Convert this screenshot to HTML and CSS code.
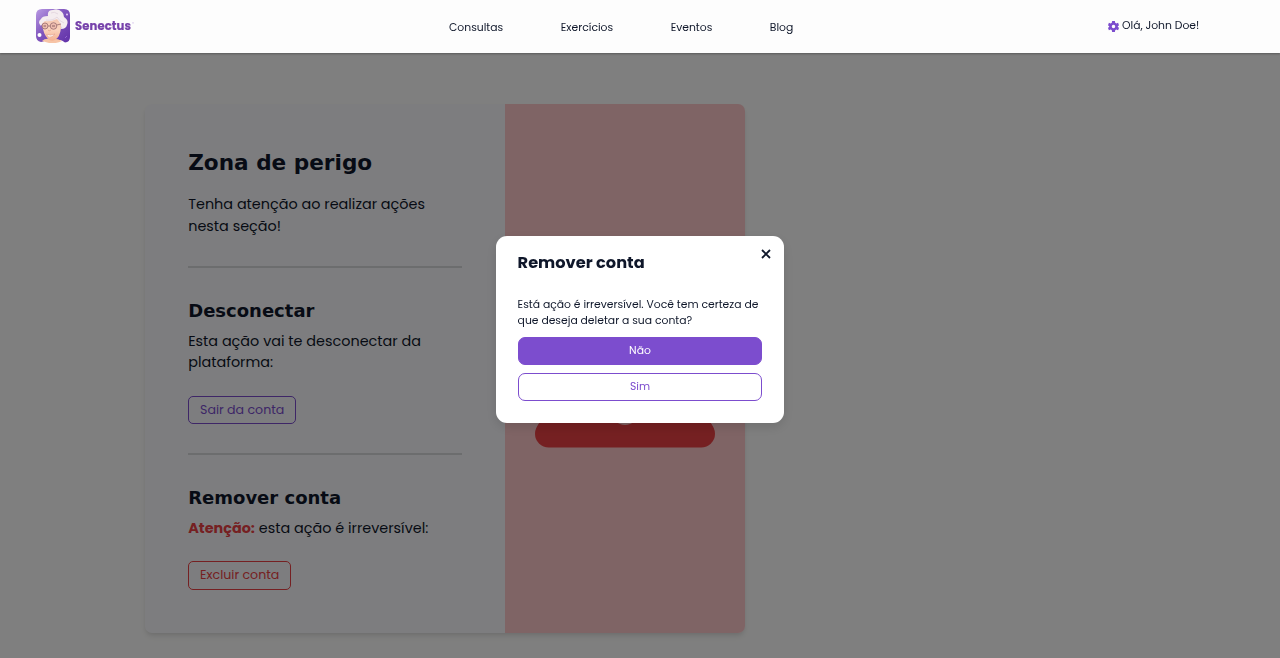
FILE: index.html
```html
<!DOCTYPE html>
<html lang="pt-BR">
<head>
<meta charset="utf-8">
<title>Senectus</title>
<link rel="stylesheet" href="styles.css">
</head>
<body>
<header class="header">
  <a class="logo">
    <svg class="avatar" viewBox="0 0 34 34">
      <defs>
        <linearGradient id="bg" x1="0" y1="0" x2="1" y2="1"><stop stop-color="#b99ae4"/><stop offset=".45" stop-color="#8055bd"/><stop offset="1" stop-color="#6030a8"/></linearGradient>
        <linearGradient id="skin" x1="0" y1="0" x2="0" y2="1"><stop stop-color="#f3c4ae"/><stop offset=".55" stop-color="#fbd3bd"/><stop offset="1" stop-color="#f3b090"/></linearGradient>
      </defs>
      <path d="M6 0H28Q34 0 34 6V28Q34 33 29 33.500Q26 31 24 31L9 31Q8 33 5 33Q0 32 0 27V6Q0 0 6 0Z" fill="url(#bg)"/>
      <path d="M6 32Q9 29 14 30Q21 29 26 32Q20 35 13 34Z" fill="#f7c4a6"/>
      <path d="M6 14Q9 6 17 7Q26 8 25 19Q24 28 19 31Q15 33 12 30Q7 25 6 14Z" fill="url(#skin)"/>
      <path d="M5 17Q1 13 5 10Q6 7 12 7Q11 1 17 1Q22-1 26 3Q28 5 28 8Q33 11 31 16Q30 20 25 20Q26 15 21 10Q14 13 9 12Q6 14 5 17Z" fill="#f4ecef"/>
      <path d="M10 11Q17 12 21 8Q23 12 28 14M15 4Q18 2 22 5" fill="none" stroke="#decfda" stroke-width=".7"/>
      <g fill="#edbcae" stroke="#986c70" stroke-width=".8"><circle cx="9" cy="17" r="3"/><circle cx="17.500" cy="17" r="3.300"/><path d="M12 17H14.200M20.800 16L25 15"/></g>
      <path d="M7.500 17H10M16 17H19" stroke="#80555b" stroke-width=".9"/>
      <path d="M12 21Q13 22.500 15 21" fill="none" stroke="#e6a38c" stroke-width=".8"/>
      <path d="M10.500 25.500Q15 27 19 25Q16 29 12.500 28Z" fill="#fff" stroke="#e4a08d" stroke-width=".6"/>
      <circle cx="3.500" cy="26" r="2" fill="#fff"/><circle cx="31" cy="5.500" r="1" fill="#e2c8f5"/><path d="M29 29L31 27" stroke="#9265cf"/>
    </svg>
    <span class="brand">Senectus</span><span class="mark">®</span>
  </a>
  <nav class="nav"><a>Consultas</a><a>Exercícios</a><a>Eventos</a><a>Blog</a></nav>
  <div class="user">
    <svg class="gear" viewBox="0 0 24 24"><path fill="#7c4dce" fill-rule="evenodd" d="M9 0H15L15.700 4L18 5.200L22 4L24 9L21 12L24 15L22 20L18 18.800L15.700 20L15 24H9L8.300 20L6 18.800L2 20L0 15L3 12L0 9L2 4L6 5.200L8.300 4ZM12 8.200A3.800 3.800 0 1 0 12 15.800A3.800 3.800 0 1 0 12 8.200Z"/></svg>
    <span>Olá, John Doe!</span>
  </div>
</header>
<main class="page">
  <section class="card">
    <div class="content">
      <h1 class="title">Zona de perigo</h1>
      <p class="text intro">Tenha atenção ao realizar ações<br>nesta seção!</p>
      <hr class="rule">
      <h2 class="subtitle">Desconectar</h2>
      <p class="text leave">Esta ação vai te desconectar da<br>plataforma:</p>
      <button class="btn exit">Sair da conta</button>
      <hr class="rule">
      <h2 class="subtitle">Remover conta</h2>
      <p class="text warn"><strong class="danger">Atenção:</strong> esta ação é irreversível:</p>
      <button class="btn delete">Excluir conta</button>
    </div>
    <div class="side">
      <svg class="alert" viewBox="0 0 180 160"><path d="M78 8Q90-8 102 8L177 137Q184 153 166 159H14Q-4 153 3 137Z" fill="#eb4144"/><rect x="0" y="132" width="180" height="27.600" rx="13.800" fill="#eb4144"/><rect x="82" y="45" width="16" height="55" rx="8" fill="#ffc9cb"/><circle cx="90" cy="124" r="13" fill="#ffc9cb"/></svg>
    </div>
  </section>
</main>
<div class="overlay">
  <div class="modal" role="dialog">
    <div class="modal-head">
      <h3 class="modal-title">Remover conta</h3>
      <svg class="close" viewBox="0 0 10 10"><path d="M1 1L9 9M9 1L1 9" stroke="#0f172a" stroke-width="1.800"/></svg>
    </div>
    <p class="question">Está ação é irreversível. Você tem certeza de<br>que deseja deletar a sua conta?</p>
    <button class="choice primary">Não</button>
    <button class="choice">Sim</button>
  </div>
</div>
</body>
</html>
```
FILE: styles.css
```css
* { box-sizing: border-box; }
html { overflow: hidden; }
body { margin: 0; height: 658px; overflow: hidden; background: #fffffe; color: #0f172a; font-family: Poppins, Inter, sans-serif; }
h1, h2, h3, p, hr { margin: 0; }
button { font-family: inherit; }
.header { position: relative; z-index: 3; height: 53px; background: #fdfdfd; box-shadow: 0 1px 2px rgba(0,0,0,.3); display: grid; grid-template-columns: 449px 1fr 172px; font-size: 10.8px; }
.logo { display: flex; padding: 9px 0 0 36px; align-items: flex-start; }
.avatar { width: 34px; height: 34px; }
.brand { width: 57px; margin: 9px 0 0 5px; font-size: 11.6px; line-height: 17px; font-weight: 700; color: #7742ab; -webkit-text-stroke: .2px #7742ab; letter-spacing: .1px; }
.mark { margin-top: 12px; font-size: 4px; color: #b798da; }
.nav { display: flex; padding-top: 20px; gap: 57.5px; line-height: 16px; }
.user { display: flex; align-items: flex-start; gap: 3px; padding-top: 18px; line-height: 16px; white-space: nowrap; }
.gear { width: 11px; height: 11px; margin-top: 3px; }
.page { padding: 51px 0 0 145px; }
.card { display: grid; grid-template-columns: 360px 240px; width: 600px; height: 529px; border-radius: 7px; overflow: hidden; background: #fbfbff; box-shadow: 0 4px 6px -1px rgba(0,0,0,.1), 0 2px 4px -1px rgba(0,0,0,.06); }
.content { padding: 43px 43.2px 0; }
.title { font: bold 21.6px/32px "DejaVu Sans", sans-serif; }
.subtitle { font: bold 18px/27px "DejaVu Sans", sans-serif; margin-top: 29px; }
.text { font-size: 14.4px; line-height: 21.6px; white-space: nowrap; }
.intro { margin-top: 15px; }
.rule { border: 0; height: 2px; width: 274px; background: #d9dadd; margin-top: 29px; }
.leave { margin-top: 6.4px; }
.warn { margin-top: 6.8px; }
.btn { display: block; height: 28px; padding: 0; border: 1px solid #7c4dce; border-radius: 5px; background: transparent; color: #7c4dce; font-size: 12.6px; white-space: nowrap; }
.exit { width: 108px; margin-top: 22.6px; }
.danger { color: #eb4144; }
.delete { width: 103px; height: 29px; margin-top: 21.2px; border-color: #eb4144; color: #eb4144; }
.side { display: flex; justify-content: center; align-items: flex-start; padding-top: 184px; background: #ffc9cb; }
.alert { width: 180px; height: 160px; }
.overlay { position: fixed; inset: 0; z-index: 2; display: flex; justify-content: center; align-items: flex-start; padding-top: 236px; background: rgba(0,0,0,.5); }
.modal { width: 288px; height: 187px; padding: 15px 21.6px 0; border-radius: 11px; background: #fff; box-shadow: 0 4px 12px rgba(0,0,0,.12); }
.modal-head { display: flex; justify-content: space-between; align-items: flex-start; margin-right: -9px; }
.modal-title { font-size: 16.2px; line-height: 24px; font-weight: 700; }
.close { width: 10px; height: 10px; margin-top: -2px; }
.question { margin-top: 22px; font-size: 10.8px; line-height: 16.2px; white-space: nowrap; }
.choice { display: block; width: 244.8px; height: 28px; margin-top: 8px; padding: 0; border: 1px solid #7c4dce; border-radius: 7px; background: #fff; color: #7c4dce; font-size: 10.8px; }
.choice.primary { background: #7c4dce; color: #fff; }
```
